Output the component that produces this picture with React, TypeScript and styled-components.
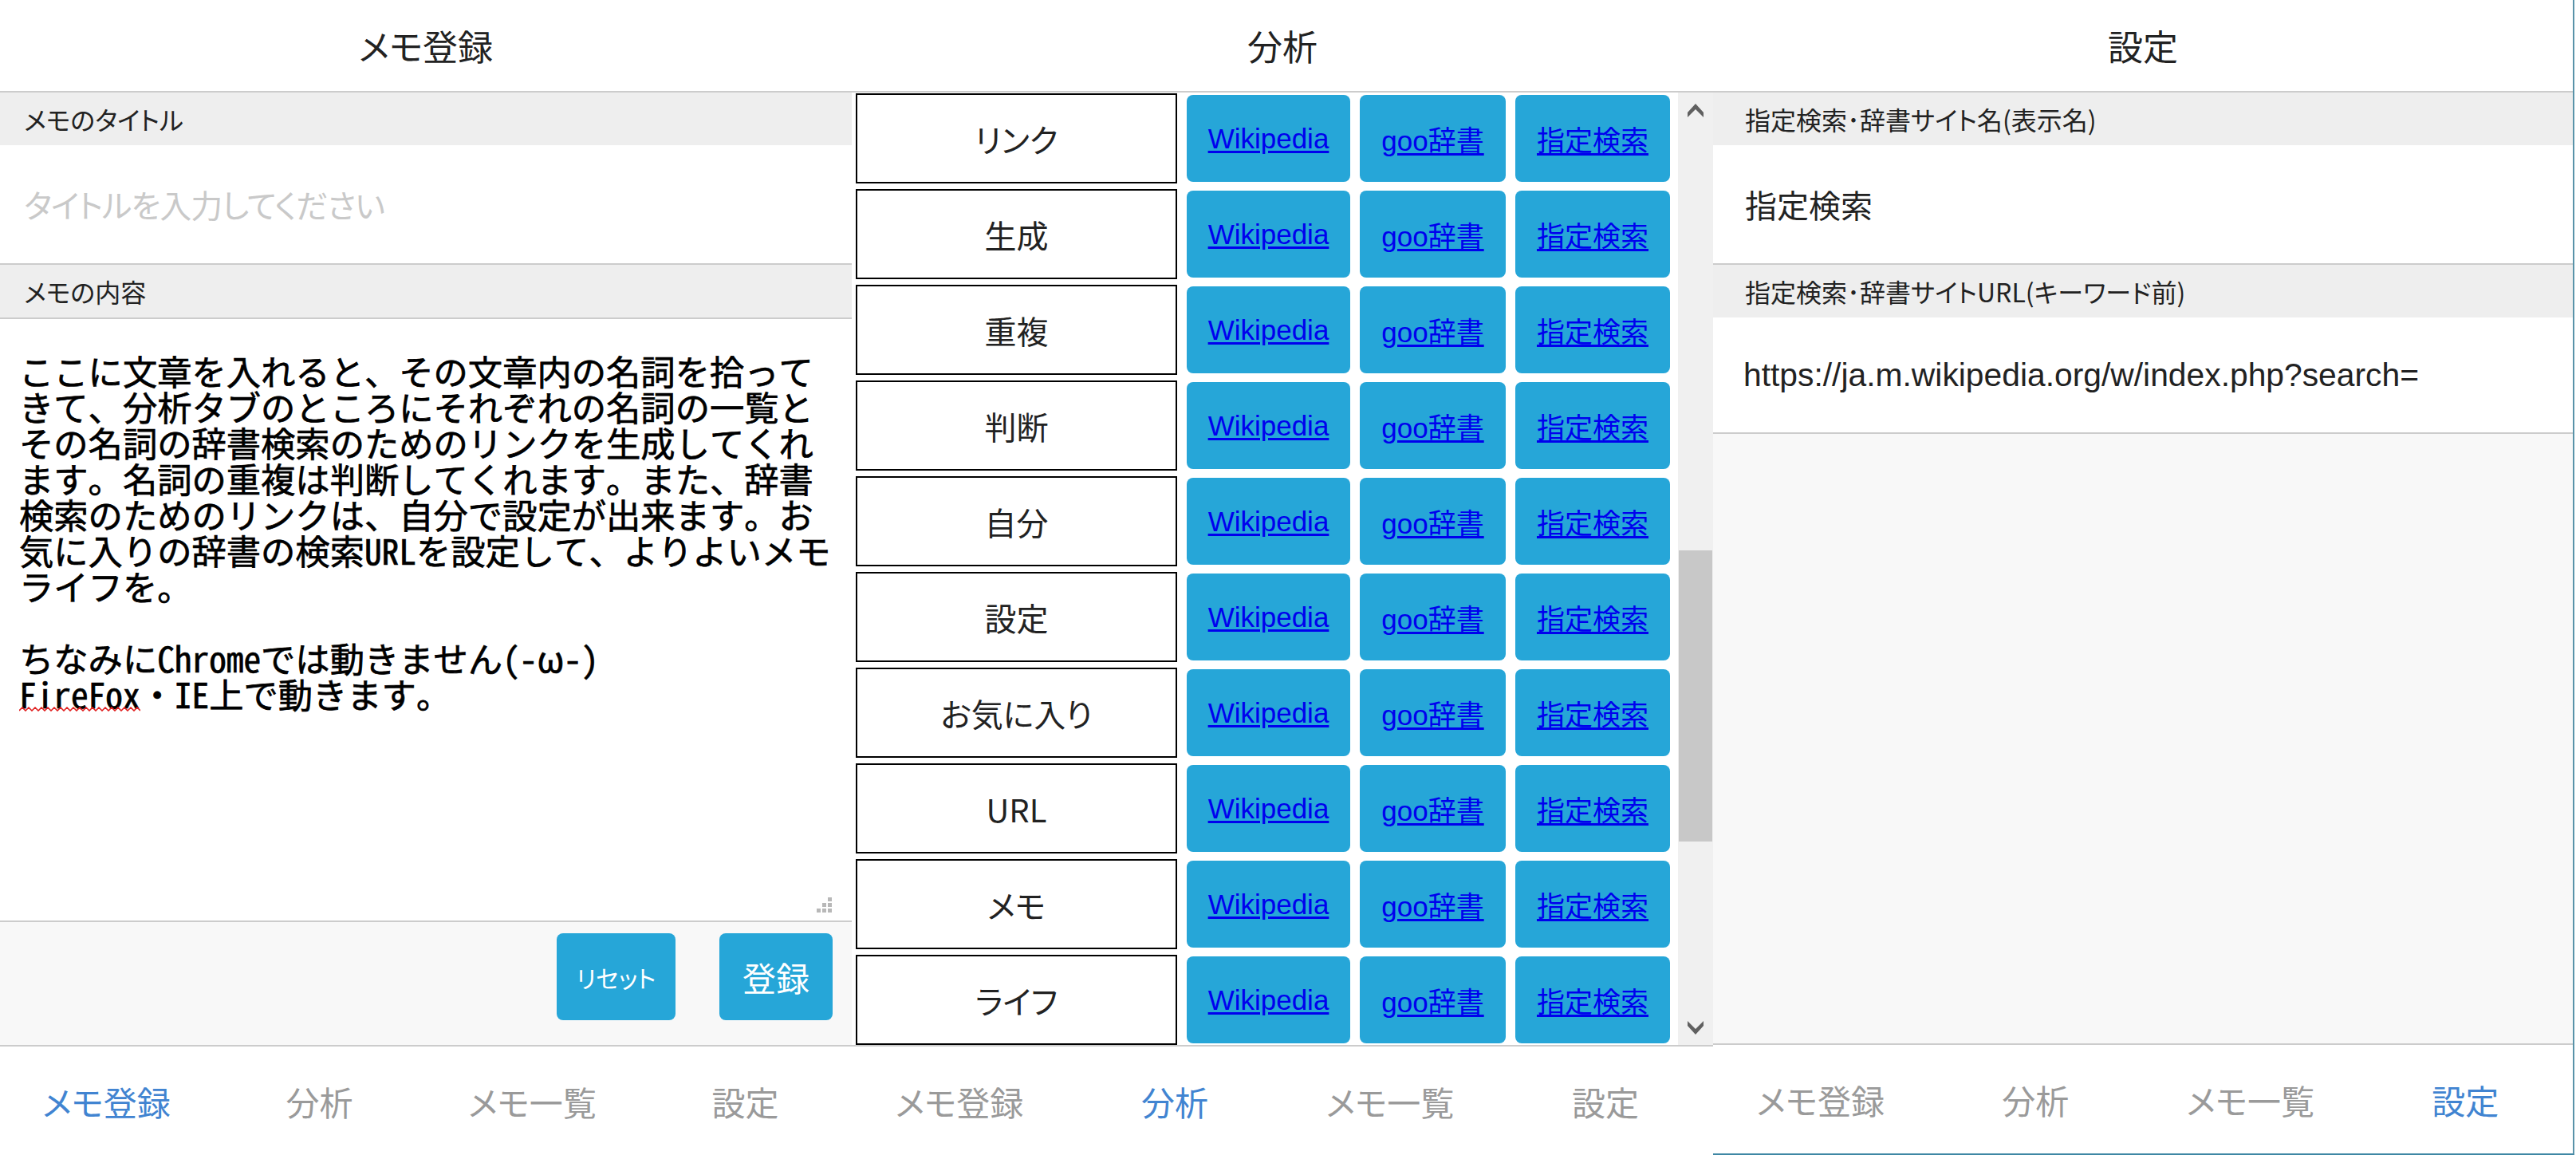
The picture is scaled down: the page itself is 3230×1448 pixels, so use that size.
import React from "react";
import styled, { createGlobalStyle, css } from "styled-components";

const GlobalStyle = createGlobalStyle`
  html, body { margin: 0; padding: 0; background: #ffffff; }
  body {
    font-family: "Noto Sans CJK JP", "Noto Sans", sans-serif;
    font-feature-settings: "palt";
    color: #222222;
  }
  * { box-sizing: border-box; }
`;

const Page = styled.div`
  display: flex;
  width: 3230px;
  height: 1448px;
  overflow: hidden;
  background: #ffffff;
`;

const Pane = styled.section<{ $width: number; $focused?: boolean }>`
  display: flex;
  flex-direction: column;
  flex: 0 0 ${(p) => p.$width}px;
  height: 100%;
  background: #ffffff;
  ${(p) =>
    p.$focused &&
    css`
      border-right: 2px solid #5a93a9;
      border-bottom: 2px solid #3f87a4;
    `}
`;

const Header = styled.header`
  flex: 0 0 116px;
  display: flex;
  align-items: center;
  justify-content: center;
  border-bottom: 2px solid #cccccc;
  font-size: 44px;
  color: #222222;
`;

const FieldLabel = styled.div<{ $inset: number; $divider?: boolean }>`
  flex: 0 0 ${(p) => (p.$divider ? 68 : 66)}px;
  display: flex;
  align-items: center;
  padding-left: ${(p) => p.$inset}px;
  background: #eeeeee;
  font-size: 32px;
  color: #222222;
  ${(p) => p.$divider && css`border-bottom: 2px solid #cccccc;`}
`;

const TextField = styled.input<{ $inset: number; $height: number; $latin?: boolean }>`
  flex: 0 0 ${(p) => p.$height}px;
  width: 100%;
  border: none;
  border-bottom: 2px solid #cccccc;
  outline: none;
  background: #ffffff;
  padding: 0 0 0 ${(p) => p.$inset}px;
  font-family: ${(p) =>
    p.$latin ? `"Liberation Sans", "Noto Sans CJK JP", sans-serif` : `"Noto Sans CJK JP", sans-serif`};
  font-feature-settings: "palt";
  font-size: ${(p) => (p.$latin ? 40.8 : 40)}px;
  color: #222222;
  &::placeholder {
    color: #c9c9c9;
    letter-spacing: -1px;
  }
`;

const MemoBox = styled.div`
  position: relative;
  flex: 1 1 auto;
  padding: 42px 24px 0;
  background: #ffffff;
  font-family: "Noto Sans Mono CJK JP", "Noto Sans CJK JP", monospace;
  font-feature-settings: normal;
  font-size: 43.3px;
  line-height: 45px;
  white-space: pre;
  color: #000000;
  -webkit-text-stroke: 0.7px #000000;
  overflow: hidden;
`;

const Squiggle = styled.svg`
  position: absolute;
  left: 24px;
  top: 486px;
`;

const Grip = styled.svg`
  position: absolute;
  right: 25px;
  bottom: 9px;
`;

const ButtonBar = styled.div`
  flex: 0 0 156px;
  display: flex;
  justify-content: flex-end;
  align-items: flex-start;
  gap: 55px;
  padding: 14px 24px 0 0;
  border-top: 2px solid #cccccc;
  background: #f8f8f8;
`;

const ActionButton = styled.button<{ $width: number; $size: number }>`
  width: ${(p) => p.$width}px;
  height: 109px;
  border: none;
  border-radius: 8px;
  background: #26a6d8;
  color: #ffffff;
  font-family: "Noto Sans CJK JP", sans-serif;
  font-feature-settings: "palt";
  font-size: ${(p) => p.$size}px;
  padding: 0;
`;

const TabBar = styled.nav`
  flex: 0 0 138px;
  display: grid;
  grid-template-columns: repeat(4, 1fr);
  align-items: center;
  border-top: 2px solid #cccccc;
  background: #ffffff;
`;

const Tab = styled.div<{ $active?: boolean }>`
  text-align: center;
  font-size: 42px;
  color: ${(p) => (p.$active ? "#4184d1" : "#9a9a9a")};
`;

const AnalysisBody = styled.div`
  flex: 1 1 auto;
  display: flex;
  min-height: 0;
`;

const WordList = styled.div`
  flex: 1 1 auto;
  display: flex;
  flex-direction: column;
  gap: 7px;
  padding: 1px 0 0 5px;
  overflow: hidden;
`;

const WordRow = styled.div`
  flex: 0 0 113px;
  display: flex;
  align-items: center;
  gap: 12px;
`;

const WordCell = styled.div`
  flex: 0 0 403px;
  height: 113px;
  display: flex;
  align-items: center;
  justify-content: center;
  border: 2px solid #000000;
  background: #ffffff;
  font-size: 40px;
  color: #222222;
`;

const LinkButton = styled.div<{ $width: number }>`
  flex: 0 0 ${(p) => p.$width}px;
  height: 109px;
  display: flex;
  align-items: center;
  justify-content: center;
  border-radius: 8px;
  background: #26a6d8;
`;

const DictLink = styled.a`
  font-family: "Liberation Sans", "Noto Sans CJK JP", sans-serif;
  font-feature-settings: normal;
  font-size: 35px;
  color: #0000ee;
  text-decoration: underline;
  text-underline-offset: 3px;
`;

const ScrollTrack = styled.div`
  flex: 0 0 44px;
  display: flex;
  flex-direction: column;
  background: #f0f0f0;
`;

const ScrollArrow = styled.div`
  flex: 0 0 44px;
  display: flex;
  align-items: center;
  justify-content: center;
`;

const ScrollRail = styled.div`
  flex: 1 1 auto;
  display: flex;
  flex-direction: column;
  padding: 0 1px;
`;

const ScrollThumb = styled.div`
  margin-top: 530px;
  height: 365px;
  background: #c8c8c8;
`;

const SettingsFiller = styled.div`
  flex: 1 1 auto;
  background: #f8f8f8;
`;

const tabs = ["メモ登録", "分析", "メモ一覧", "設定"];

const Tabs = ({ active }: { active: number }) => (
  <TabBar>
    {tabs.map((t, i) => (
      <Tab key={t} $active={i === active}>
        {t}
      </Tab>
    ))}
  </TabBar>
);

const words = ["リンク", "生成", "重複", "判断", "自分", "設定", "お気に入り", "URL", "メモ", "ライフ"];

const memoText = [
  "ここに文章を入れると、その文章内の名詞を拾って",
  "きて、分析タブのところにそれぞれの名詞の一覧と",
  "その名詞の辞書検索のためのリンクを生成してくれ",
  "ます。名詞の重複は判断してくれます。また、辞書",
  "検索のためのリンクは、自分で設定が出来ます。お",
  "気に入りの辞書の検索URLを設定して、よりよいメモ",
  "ライフを。",
  "",
  "ちなみにChromeでは動きません(-ω-)",
  "FireFox・IE上で動きます。",
].join("\n");

const wavePath = (() => {
  let d = "M0 5";
  for (let x = 0; x < 152; x += 8) {
    d += ` L${x + 4} 1 L${x + 8} 5`;
  }
  return d;
})();

const Chevron = ({ down }: { down?: boolean }) => (
  <svg width="20" height="17" viewBox="0 0 20 17">
    <polygon
      points={down ? "10,17 20,6 20,0 10,10 0,0 0,6" : "10,0 20,11 20,17 10,7 0,17 0,11"}
      fill="#606060"
    />
  </svg>
);

export default function App() {
  return (
    <>
      <GlobalStyle />
      <Page>
        <Pane $width={1068}>
          <Header>メモ登録</Header>
          <FieldLabel $inset={30}>メモのタイトル</FieldLabel>
          <TextField $inset={30} $height={150} placeholder="タイトルを入力してください" />
          <FieldLabel $inset={30} $divider>
            メモの内容
          </FieldLabel>
          <MemoBox>
            {memoText}
            <Squiggle width="152" height="6" viewBox="0 0 152 6">
              <path d={wavePath} fill="none" stroke="#e02020" strokeWidth="1.6" />
            </Squiggle>
            <Grip width="20" height="20" viewBox="0 0 20 20">
              <rect x="15" y="0" width="5" height="5" fill="#b8b8b8" />
              <rect x="8" y="7" width="5" height="5" fill="#b8b8b8" />
              <rect x="15" y="7" width="5" height="5" fill="#b8b8b8" />
              <rect x="1" y="14" width="5" height="5" fill="#b8b8b8" />
              <rect x="8" y="14" width="5" height="5" fill="#b8b8b8" />
              <rect x="15" y="14" width="5" height="5" fill="#b8b8b8" />
            </Grip>
          </MemoBox>
          <ButtonBar>
            <ActionButton $width={149} $size={30}>
              リセット
            </ActionButton>
            <ActionButton $width={142} $size={42}>
              登録
            </ActionButton>
          </ButtonBar>
          <Tabs active={0} />
        </Pane>

        <Pane $width={1080}>
          <Header>分析</Header>
          <AnalysisBody>
            <WordList>
              {words.map((w) => (
                <WordRow key={w}>
                  <WordCell>{w}</WordCell>
                  <LinkButton $width={205}>
                    <DictLink href="#">Wikipedia</DictLink>
                  </LinkButton>
                  <LinkButton $width={183}>
                    <DictLink href="#">goo辞書</DictLink>
                  </LinkButton>
                  <LinkButton $width={194}>
                    <DictLink href="#">指定検索</DictLink>
                  </LinkButton>
                </WordRow>
              ))}
            </WordList>
            <ScrollTrack>
              <ScrollArrow>
                <Chevron />
              </ScrollArrow>
              <ScrollRail>
                <ScrollThumb />
              </ScrollRail>
              <ScrollArrow>
                <Chevron down />
              </ScrollArrow>
            </ScrollTrack>
          </AnalysisBody>
          <Tabs active={1} />
        </Pane>

        <Pane $width={1080} $focused>
          <Header>設定</Header>
          <FieldLabel $inset={40}>指定検索･辞書サイト名(表示名)</FieldLabel>
          <TextField $inset={40} $height={150} defaultValue="指定検索" />
          <FieldLabel $inset={40}>指定検索･辞書サイトURL(キーワード前)</FieldLabel>
          <TextField
            $inset={38}
            $height={146}
            $latin
            defaultValue="https://ja.m.wikipedia.org/w/index.php?search="
          />
          <SettingsFiller />
          <Tabs active={3} />
        </Pane>
      </Page>
    </>
  );
}
